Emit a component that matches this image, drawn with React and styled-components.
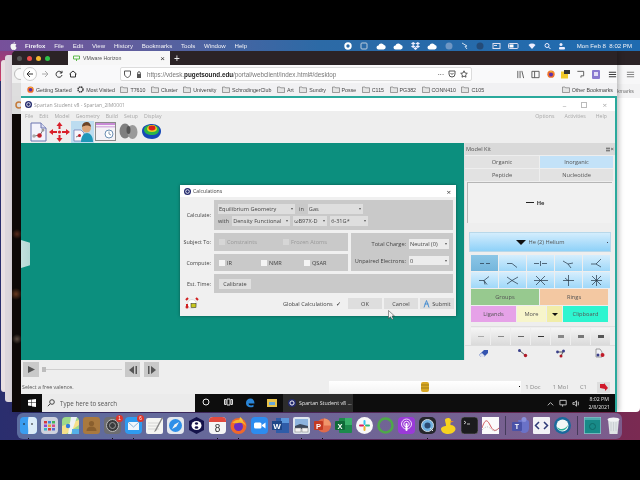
import styled, { createGlobalStyle } from "styled-components";

const Global = createGlobalStyle`
  html, body { margin: 0; padding: 0; background: #000; overflow: hidden; }
  * { box-sizing: border-box; }
`;

const winFont = `"Open Sans", "Noto Sans", sans-serif`;
const macFont = `"Liberation Sans", Arial, sans-serif`;

const Screen = styled.div`
  width: 640px;
  height: 480px;
  background: #000;
  display: flex;
  flex-direction: column;
  overflow: hidden;
  filter: blur(0.3px);
`;
const Letterbox = styled.div`
  height: ${({ $h }) => $h}px;
  background: #000;
  flex: none;
`;

/* mac menu bar */
const MenuBar = styled.div`
  height: 11px;
  flex: none;
  display: flex;
  align-items: center;
  padding: 0 8px 0 10px;
  background: linear-gradient(90deg, #77509a 0%, #5f5f9e 22%, #2c6aa6 50%, #1f6bb0 100%);
  color: #f2f2f6;
  font: 6.1px ${macFont};
`;
const MacMenus = styled.div`
  display: flex;
  align-items: center;
  gap: 8.8px;
  margin-left: 8px;
`;
const MacMenu = styled.span`
  font-weight: ${({ $bold }) => ($bold ? 700 : 400)};
`;
const Status = styled.div`
  margin-left: auto;
  display: flex;
  align-items: center;
  gap: 7.6px;
`;
const Clock = styled.span`
  margin-left: 3px;
  white-space: pre;
`;

/* desktop */
const Desktop = styled.div`
  position: relative;
  height: 389px;
  flex: none;
  overflow: hidden;
  background: linear-gradient(90deg, #2a2e6e 0%, #5c2a5c 60%, #7a2a52 100%);
`;
const WallTop = styled.div`
  position: absolute;
  left: 0;
  top: 0;
  width: 14px;
  height: 30px;
  background: linear-gradient(180deg, #8d3f80, #cf3a63);
`;
const BackWindow = styled.div`
  position: absolute;
  left: ${({ $x }) => $x}px;
  top: ${({ $y }) => $y}px;
  width: ${({ $w }) => $w}px;
  height: ${({ $h }) => $h}px;
  background: ${({ $c }) => $c};
  border-radius: 3px;
`;
const RightWindow = styled.div`
  position: absolute;
  left: 600px;
  top: 0;
  width: 40px;
  height: 361px;
  background: #fff;
  display: flex;
  flex-direction: column;
  border-bottom-right-radius: 4px;
`;
const RightTabs = styled.div`
  height: 14px;
  background: #2b2326;
`;
const RightNav = styled.div`
  height: 19px;
  background: #f7f7f8;
  display: flex;
  align-items: center;
  justify-content: flex-end;
  padding-right: 5px;
`;
const RightMarks = styled.div`
  height: 14px;
  background: #f3f3f4;
  display: flex;
  align-items: center;
  justify-content: flex-end;
  padding-right: 6px;
  color: #777;
  font: 5.3px ${macFont};
`;
const Browser = styled.div`
  position: absolute;
  left: 12px;
  top: 0;
  width: 605px;
  height: 361px;
  display: flex;
  flex-direction: column;
  box-shadow: 2px 0 5px rgba(0, 0, 0, 0.25);
`;
const TabStrip = styled.div`
  height: 14px;
  flex: none;
  background: #2b2326;
  display: flex;
  align-items: center;
  border-top-left-radius: 4px;
`;
const Light = styled.i`
  width: 5px;
  height: 5px;
  border-radius: 50%;
  background: ${({ $c }) => $c};
  margin-left: ${({ $m }) => $m}px;
  flex: none;
`;
const Tab = styled.div`
  align-self: flex-end;
  height: 14px;
  width: 102px;
  margin-left: 18px;
  background: #f7f7f7;
  display: flex;
  align-items: center;
  gap: 3px;
  padding: 0 5px;
  color: #555;
  font: 5.2px ${macFont};
`;
const TabClose = styled.span`
  margin-left: auto;
  font-size: 8px;
  color: #333;
`;
const NewTab = styled.span`
  margin-left: 0;
  width: 14px;
  text-align: center;
  color: #eee;
  font: 10px ${macFont};
`;
const BrowserBody = styled.div`
  flex: 1;
  min-height: 0;
  display: flex;
`;
const Strip = styled.div`
  width: 9px;
  flex: none;
  display: flex;
  flex-direction: column;
`;
const StripNav = styled.div`
  height: 18px;
  background: #efefef;
  display: flex;
  align-items: center;
  padding-left: 1px;
`;
const StripMarks = styled.div`
  height: 13px;
  background: #dedede;
`;
const StripPage = styled.div`
  height: 18px;
  background: #ddd;
  display: flex;
  align-items: center;
  padding-left: 3px;
`;
const StripDark = styled.div`
  flex: 1;
  background:
    radial-gradient(circle at 5px 120px, #5a2b1c 0, transparent 5px),
    radial-gradient(circle at 4px 180px, #6a3a20 0, transparent 6px),
    radial-gradient(circle at 5px 225px, #5a4a40 0, transparent 5px),
    #0e0807;
`;
const BrowserMain = styled.div`
  flex: 1;
  min-width: 0;
  display: flex;
  flex-direction: column;
`;
const NavBar = styled.div`
  height: 18px;
  flex: none;
  background: #f9f9fa;
  display: flex;
  align-items: center;
`;
const NavIcon = styled.span`
  width: ${({ $w }) => $w || 14}px;
  display: flex;
  justify-content: center;
  flex: none;
`;
const BackCircle = styled.span`
  width: 14px;
  height: 14px;
  margin-left: 2px;
  margin-right: 1px;
  border-radius: 50%;
  background: #fff;
  border: 1px solid #ccc;
  display: flex;
  align-items: center;
  justify-content: center;
  flex: none;
`;
const UrlBox = styled.div`
  width: 352px;
  height: 14px;
  margin-left: 40px;
  background: #fff;
  border: 1px solid #dcdcdc;
  border-radius: 2px;
  display: flex;
  align-items: center;
  gap: 5px;
  padding: 0 3px;
  color: #777;
  font: 6.3px ${macFont};
  flex: none;
`;
const UrlText = styled.span`
  white-space: nowrap;
  b { color: #222; font-weight: 700; }
`;
const UrlTail = styled.div`
  margin-left: auto;
  display: flex;
  align-items: center;
  gap: 4px;
  color: #333;
`;
const NavTools = styled.div`
  display: flex;
  align-items: center;
  gap: 2px;
  margin-left: 42px;
`;
const Bookmarks = styled.div`
  height: 13px;
  flex: none;
  background: #f1f1f3;
  display: flex;
  align-items: center;
  gap: 5.5px;
  padding: 0 4px 0 6px;
  color: #444;
  font: 5.3px ${macFont};
  white-space: nowrap;
`;
const Mark = styled.span`
  display: flex;
  align-items: center;
  gap: 2px;
  margin-left: ${({ $auto }) => ($auto ? "auto" : "0")};
`;
const Horizon = styled.div`
  flex: 1;
  min-height: 0;
  display: flex;
  flex-direction: column;
  border-top: 2px solid #2aa99c;
  border-right: 2px solid #2aa99c;
`;
const TitleBar = styled.div`
  height: 13px;
  flex: none;
  background: #fff;
  display: flex;
  align-items: center;
  gap: 2px;
  padding: 0 8px 0 4px;
  color: #999;
  font: 5.1px ${winFont};
`;
const WinControls = styled.div`
  margin-left: auto;
  display: flex;
  gap: 15px;
  color: #aaa;
  font-size: 8px;
  align-items: center;
`;
const AppMenu = styled.div`
  height: 9px;
  flex: none;
  background: #eeeeee;
  display: flex;
  align-items: center;
  gap: 6px;
  padding: 0 8px 0 4px;
  color: #a8a8a8;
  font: 5.2px ${winFont};
`;
const AppMenuRight = styled.div`
  margin-left: auto;
  display: flex;
  gap: 10px;
`;
const Tools = styled.div`
  height: 23px;
  flex: none;
  background: #eeeeee;
  display: flex;
  align-items: center;
  padding-left: 7px;
  gap: 1px;
`;
const ToolBtn = styled.div`
  width: ${({ $w }) => $w}px;
  height: 22px;
  display: flex;
  align-items: center;
  justify-content: center;
  background: ${({ $on }) => ($on ? "#bcdcf0" : "transparent")};
`;
const MainRow = styled.div`
  height: 217px;
  flex: none;
  display: flex;
`;
const Canvas = styled.div`
  position: relative;
  width: 443px;
  flex: none;
  background: #0c8f7e;
`;
const SideHandle = styled.div`
  position: absolute;
  left: 0;
  top: 97px;
  width: 9px;
  height: 28px;
  background: linear-gradient(90deg, #c3e0dd, #b3d8d4);
  clip-path: polygon(0 0, 100% 10%, 100% 90%, 0 100%);
`;

/* dialog */
const Dialog = styled.div`
  position: absolute;
  left: 159px;
  top: 42px;
  width: 276px;
  height: 131px;
  background: #f0f0f0;
  box-shadow: 0 0 3px rgba(0, 0, 0, 0.4);
  color: #444;
  font: 5.6px ${winFont};
`;
const DialogTitle = styled.div`
  height: 12px;
  background: #fff;
  display: flex;
  align-items: center;
  gap: 2px;
  padding: 0 5px 0 4px;
  font-size: 5.2px;
`;
const DialogClose = styled.span`
  margin-left: auto;
  font-size: 8px;
  color: #444;
`;
const Form = styled.div`
  display: grid;
  grid-template-columns: 29px 134px 102px;
  grid-template-rows: 30px 18px 17px 19px;
  gap: 3px;
  padding: 3px 0 0 2px;
`;
const Label = styled.div`
  display: flex;
  align-items: center;
  justify-content: flex-end;
  white-space: nowrap;
  font-size: 5.4px;
`;
const Section = styled.div`
  background: #c9c9c9;
  grid-column: ${({ $col }) => $col || "auto"};
  grid-row: ${({ $row }) => $row || "auto"};
  display: flex;
  flex-direction: ${({ $stack }) => ($stack ? "column" : "row")};
  align-items: ${({ $stack }) => ($stack ? "stretch" : "center")};
  justify-content: ${({ $stack }) => ($stack ? "center" : "flex-start")};
  gap: ${({ $gap }) => $gap || 0}px;
  padding: 0 4px 0 ${({ $pl }) => $pl || 5}px;
`;
const FormRow = styled.div`
  display: flex;
  align-items: center;
  gap: ${({ $gap }) => $gap || 3}px;
  justify-content: ${({ $end }) => ($end ? "flex-end" : "flex-start")};
  white-space: nowrap;
`;
const Select = styled.div`
  width: ${({ $w }) => $w}px;
  height: ${({ $h }) => $h || 10}px;
  background: ${({ $light }) => ($light ? "#ececec" : "#dedede")};
  display: flex;
  align-items: center;
  padding: 0 1px;
  color: #444;
  white-space: nowrap;
  overflow: hidden;
  flex: none;
  position: relative;
  &::after {
    content: "";
    position: absolute;
    right: 2px;
    top: 50%;
    margin-top: -1px;
    border: 1px solid transparent;
    border-top: 2px solid #555;
  }
`;
const Check = styled.label`
  display: flex;
  align-items: center;
  gap: 2px;
  width: ${({ $w }) => $w}px;
  color: ${({ $off }) => ($off ? "#999" : "#444")};
  white-space: nowrap;
  flex: none;
`;
const Box = styled.i`
  width: 6px;
  height: 6px;
  background: ${({ $off }) => ($off ? "#d6d6d6" : "#f4f4f4")};
  flex: none;
`;
const SmallBtn = styled.div`
  width: 32px;
  height: 10px;
  background: #e0e0e0;
  display: flex;
  align-items: center;
  justify-content: center;
`;
const DialogFoot = styled.div`
  display: flex;
  align-items: center;
  height: 13px;
  margin-top: 4px;
  padding: 0 2px 0 5px;
`;
const GlobalCalc = styled.span`
  margin-left: 84px;
  display: flex;
  align-items: center;
  gap: 3px;
  white-space: nowrap;
  width: 63px;
`;
const Tick = styled.span`
  font-size: 6px;
  color: #111;
`;
const FootBtn = styled.div`
  width: 34px;
  height: 11px;
  margin-left: 2px;
  background: #dedede;
  display: flex;
  align-items: center;
  justify-content: center;
  gap: 2px;
`;
const Pointer = styled.svg`
  position: absolute;
  left: 208px;
  top: 125px;
`;

/* model kit */
const Kit = styled.div`
  flex: 1;
  min-width: 0;
  background: #eeeeee;
  display: flex;
  flex-direction: column;
  border-left: 1px solid #e0e0e0;
  color: #555;
  font: 5.7px ${winFont};
`;
const KitTitle = styled.div`
  height: 12px;
  background: #d9d9d9;
  display: flex;
  align-items: center;
  justify-content: space-between;
  padding: 0 1px 0 1px;
  flex: none;
`;
const KitTitleTools = styled.span`
  display: flex;
  align-items: center;
  gap: 1px;
  color: #333;
  font-size: 6px;
`;
const KitTabs = styled.div`
  display: grid;
  grid-template-columns: 74px 73px;
  grid-auto-rows: 12px;
  gap: 1px 1px;
  margin-top: 1px;
  flex: none;
`;
const KitTab = styled.div`
  background: ${({ $on }) => ($on ? "#c3e2f8" : "#e2e2e2")};
  display: flex;
  align-items: center;
  justify-content: center;
`;
const Preview = styled.div`
  height: 41px;
  margin: 1px 0 0 2px;
  width: 145px;
  background: #f1f1f1;
  border-left: 1px solid #b5b5b5;
  border-top: 1px solid #b5b5b5;
  display: flex;
  align-items: center;
  justify-content: center;
  gap: 3px;
  padding-right: 10px;
  color: #333;
  flex: none;
`;
const ElementBtn = styled.div`
  position: relative;
  height: 20px;
  margin: 9px 4px 0 4px;
  background: linear-gradient(180deg, #d4edfd, #8ed1f8);
  border: 1px solid #b8d8ea;
  display: flex;
  align-items: center;
  justify-content: center;
  gap: 3px;
  flex: none;
`;
const ElementMark = styled.i`
  position: absolute;
  right: 2px;
  top: 9px;
  width: 1px;
  height: 1px;
  background: #445;
`;
const Caret = styled.i`
  width: 0;
  height: 0;
  border-left: ${({ $s }) => $s}px solid transparent;
  border-right: ${({ $s }) => $s}px solid transparent;
  border-top: ${({ $s }) => $s}px solid #111;
  display: block;
`;
const BondGrid = styled.div`
  display: grid;
  grid-template-columns: repeat(5, 27px);
  grid-auto-rows: 16px;
  gap: 1px;
  margin: 3px 0 0 6px;
  flex: none;
`;
const BondBtn = styled.div`
  background: ${({ $on }) =>
    $on ? "linear-gradient(180deg, #8cc6e6, #74b6dc)" : "linear-gradient(180deg, #d6eefd, #9fd8f9)"};
  display: flex;
  align-items: center;
  justify-content: center;
`;
const KitRow = styled.div`
  display: flex;
  gap: 1px;
  height: 16px;
  margin: 1px 0 0 6px;
  flex: none;
`;
const KitBtn = styled.div`
  width: ${({ $w }) => $w}px;
  background: ${({ $c }) => $c};
  display: flex;
  align-items: center;
  justify-content: center;
  color: #555;
  margin-left: ${({ $m }) => $m || 0}px;
`;
const OrderRow = styled.div`
  display: flex;
  gap: 1px;
  margin: 4px 0 0 6px;
  border-top: 1px solid #dfdfdf;
  padding-top: 1px;
  flex: none;
  height: 19px;
`;
const OrderBtn = styled.div`
  width: 19px;
  background: linear-gradient(180deg, #f5f5f5, #dadada);
  display: flex;
  align-items: center;
  justify-content: center;
`;
const OrderMark = styled.i`
  width: 6px;
  height: ${({ $h }) => $h}px;
  background: ${({ $c }) => $c};
  display: block;
`;
const KitIcons = styled.div`
  display: flex;
  align-items: center;
  justify-content: space-between;
  height: 14px;
  padding: 0 10px 0 13px;
  border-top: 1px solid #dddddd;
  flex: 1;
`;

/* bottom of the spartan window */
const Bottom = styled.div`
  height: 34px;
  flex: none;
  background: #eeeeee;
  display: flex;
  flex-direction: column;
  padding-top: 2px;
`;
const Player = styled.div`
  display: flex;
  align-items: center;
  height: 15px;
  padding-left: 2px;
`;
const PlayBtn = styled.div`
  width: ${({ $w }) => $w}px;
  height: 15px;
  background: #c9c9c9;
  margin-left: ${({ $m }) => $m || 0}px;
  display: flex;
  align-items: center;
  justify-content: center;
`;
const Slider = styled.div`
  width: 80px;
  margin-left: 3px;
  height: 1px;
  background: #cfcfcf;
  position: relative;
  &::before {
    content: "";
    position: absolute;
    left: 0;
    top: -2px;
    width: 4px;
    height: 5px;
    background: #bdbdbd;
  }
`;
const StatusRow = styled.div`
  display: flex;
  align-items: center;
  height: 12px;
  margin-top: 4px;
  padding: 0 5px 0 1px;
  color: #555;
  font: 5.3px ${winFont};
`;
const Progress = styled.div`
  margin-left: auto;
  width: 192px;
  height: 12px;
  background: linear-gradient(180deg, #fff, #f4f4f4);
  display: flex;
  align-items: center;
  justify-content: center;
  position: relative;
`;
const ProgressDot = styled.i`
  position: absolute;
  right: 1px;
  top: 5px;
  width: 1px;
  height: 1px;
  background: #000;
`;
const Counts = styled.div`
  display: flex;
  margin-left: 4px;
  color: #888;
  gap: 12px;
  align-items: center;
  white-space: nowrap;
  font-size: 5.9px;
`;
const SymBtn = styled.div`
  width: 13px;
  height: 11px;
  background: #ddd;
  margin-left: 10px;
  display: flex;
  align-items: center;
  justify-content: center;
`;

/* windows taskbar */
const Taskbar = styled.div`
  flex: 1;
  min-height: 0;
  background: #0d0d0d;
  display: flex;
  align-items: center;
  color: #e6e6e6;
  font: 5.3px ${winFont};
`;
const StartBtn = styled.div`
  width: 21px;
  height: 100%;
  display: flex;
  align-items: center;
  justify-content: center;
`;
const SearchBox = styled.div`
  width: 153px;
  height: 100%;
  background: #ebebeb;
  display: flex;
  align-items: center;
  gap: 5px;
  padding-left: 5px;
  color: #555;
  font-size: 6.2px;
`;
const TaskIcon = styled.div`
  width: 22px;
  display: flex;
  justify-content: center;
  flex: none;
`;
const TaskIcons = styled.div`
  display: flex;
  padding-left: 0;
`;
const TaskApp = styled.div`
  width: 70px;
  height: 100%;
  margin-left: 0;
  background: #2c2c2c;
  display: flex;
  align-items: center;
  gap: 3px;
  padding-left: 5px;
  white-space: nowrap;
`;
const Tray = styled.div`
  margin-left: auto;
  display: flex;
  align-items: center;
  gap: 4px;
  padding-right: 5px;
`;
const TrayClock = styled.div`
  text-align: center;
  line-height: 8px;
  font-size: 5.2px;
  margin-left: 3px;
`;

/* mac dock */
const Dock = styled.div`
  position: absolute;
  left: 17px;
  bottom: 1px;
  width: 605px;
  height: 26px;
  border-radius: 6px;
  background: linear-gradient(90deg, #5c6d9f, #6f6596 55%, #7d5c8c);
  display: flex;
  align-items: center;
  gap: 4px;
  padding: 0 0 1px 3px;
`;
const DockItem = styled.div`
  position: relative;
  width: 17px;
  height: 20px;
  padding-top: 1px;
  flex: none;
  &::after {
    content: "";
    display: ${({ $run }) => ($run ? "block" : "none")};
    position: absolute;
    left: 8px;
    bottom: -3px;
    width: 1px;
    height: 1px;
    background: #111;
  }
`;
const Badge = styled.span`
  position: absolute;
  top: -1px;
  right: -2px;
  width: 7px;
  height: 7px;
  border-radius: 50%;
  background: #e0362c;
  color: #fff;
  font: 4.5px/7px ${macFont};
  text-align: center;
`;
const DockSep = styled.i`
  width: 1px;
  height: 19px;
  margin: 0 2px;
  background: rgba(30, 30, 50, 0.55);
  flex: none;
`;

const Spartan = ({ size = 7 }) => (
  <svg width={size} height={size} viewBox="0 0 10 10">
    <circle cx="5" cy="5" r="5" fill="#232a6e" />
    <circle cx="5" cy="5" r="2.6" fill="none" stroke="#fff" strokeWidth="1.2" />
  </svg>
);

const Folder = () => (
  <svg width="8" height="7" viewBox="0 0 8 7">
    <path d="M.5 1h2.5l.7.8h3.8v4.7h-7z" fill="#e4e4e4" stroke="#666" strokeWidth=".6" />
  </svg>
);

const Fox = ({ s = 8 }) => (
  <svg width={s} height={s} viewBox="0 0 10 10">
    <circle cx="5" cy="5.2" r="4.6" fill="#f0702a" />
    <circle cx="5" cy="5.5" r="2.5" fill="#5b2fa8" />
    <path d="M2 1c1 1 3 0 4 .5 2 .6 3 2 3 3-1-1.200-3-2-4-1.500z" fill="#f7b52c" />
  </svg>
);

const Tray1 = ({ c = "#555", d }) => (
  <svg width="9" height="9" viewBox="0 0 10 10">
    <path d={d} fill="none" stroke={c} strokeWidth="1" />
  </svg>
);

const DocMol = () => (
  <svg width="17" height="20" viewBox="0 0 17 20">
    <path d="M1 1h10l5 5v13H1z" fill="#f3f3fb" stroke="#6a74b0" />
    <path d="M11 1v5h5" fill="#d8dcf0" stroke="#6a74b0" />
    <path d="M4 14l6-1 3-5" stroke="#777" fill="none" />
    <circle cx="4" cy="14" r="1.700" fill="#aaa" />
    <circle cx="9.500" cy="13.500" r="2.300" fill="#c2202a" />
    <circle cx="13" cy="8" r="1.500" fill="#999" />
  </svg>
);
const RedArrows = () => (
  <svg width="21" height="20" viewBox="0 0 21 20" fill="#d9202a">
    <path d="M10.500 0l3 4h-2v3h-2V4h-2zM10.500 20l3-4h-2v-3h-2v3h-2zM0 10l4-3v2h4v2H4v2zM21 10l-4-3v2h-4v2h4v2z" />
    <circle cx="10.500" cy="10" r="1.600" />
  </svg>
);
const Person = () => (
  <svg width="21" height="22" viewBox="0 0 21 22">
    <path d="M2 9h7l3 3v8H2z" fill="#f6f6fb" stroke="#6a74b0" strokeWidth=".7" />
    <path d="M4 16l4-2" stroke="#777" />
    <circle cx="7.500" cy="14.500" r="1.500" fill="#c2202a" />
    <path d="M9 21c0-6 3-9 6-9s6 3 6 9z" fill="#1f97b8" />
    <circle cx="14.500" cy="7" r="4.500" fill="#dba67a" />
    <path d="M10 6c0-4 3-5 5-5s4 2 4 5c-2-2-6-2-9 0z" fill="#6a4428" />
  </svg>
);
const CalcWin = () => (
  <svg width="21" height="19" viewBox="0 0 21 19">
    <rect x=".5" y=".5" width="20" height="18" fill="#f4f2f6" stroke="#8a8a8a" />
    <rect x="1" y="1" width="19" height="2" fill="#c98ad6" />
    <rect x="1" y="4" width="19" height="1.500" fill="#d9b4e2" />
    <circle cx="14" cy="12" r="4" fill="#fff" stroke="#6c8fb4" />
    <path d="M14 9.500V12l2 1" stroke="#4a6a8c" fill="none" strokeWidth=".7" />
  </svg>
);
const Blobs = () => (
  <svg width="19" height="17" viewBox="0 0 19 17">
    <ellipse cx="6" cy="8" rx="5.500" ry="7.500" fill="#7f7f7f" />
    <ellipse cx="13.500" cy="9" rx="5" ry="7" fill="#9a9a9a" />
    <ellipse cx="9.500" cy="7" rx="2" ry="4" fill="#555" />
  </svg>
);
const Surface = () => (
  <svg width="21" height="17" viewBox="0 0 21 17">
    <path d="M1 8c0-5 5-7 10-7s9 3 9 7-3 8-9 8S1 13 1 8z" fill="#1749b8" />
    <path d="M3 7c0-4 4-5 8-5s7 2 7 5-3 5-7 5-8-2-8-5z" fill="#2cb54a" />
    <path d="M6 6c0-2 2-4 5-4s5 2 5 4-2 3-5 3-5-1-5-3z" fill="#f0d020" />
    <ellipse cx="11" cy="5" rx="3.500" ry="2.400" fill="#d8201c" />
  </svg>
);
const Bond = ({ d }) => (
  <svg width="18" height="13" viewBox="0 0 18 13">
    <path d={d} fill="none" stroke="#234" strokeWidth=".7" />
  </svg>
);
const Eraser = () => (
  <svg width="11" height="9" viewBox="0 0 11 9">
    <path d="M1 6l5-5h4v3l-4 4H3z" fill="#3554b0" />
    <path d="M1 6l2 2h3l1-1-3-3z" fill="#dfe3ef" />
  </svg>
);
const BondIcon = ({ kind }) => (
  <svg width="11" height="10" viewBox="0 0 11 10">
    {kind === 0 && (
      <>
        <path d="M2 2l7 6" stroke="#555" />
        <circle cx="2.500" cy="2.500" r="1.500" fill="#3a3f8a" />
        <circle cx="8.500" cy="7.500" r="1.700" fill="#b01a28" />
      </>
    )}
    {kind === 1 && (
      <>
        <path d="M3 4h5l-2 4" stroke="#555" fill="none" />
        <circle cx="2.500" cy="4" r="1.400" fill="#3a3f8a" />
        <circle cx="8.500" cy="3" r="1.500" fill="#3a3f8a" />
        <circle cx="6" cy="8" r="1.500" fill="#b01a28" />
      </>
    )}
    {kind === 2 && (
      <>
        <path d="M2 1h4l2 3v5H2z" fill="#f2f2f6" stroke="#666" strokeWidth=".6" />
        <circle cx="4" cy="7" r="1.500" fill="#3a3f8a" />
        <circle cx="8.500" cy="7" r="2" fill="#c01a28" />
      </>
    )}
  </svg>
);

const Ic = ({ children }) => (
  <svg width="17" height="17" viewBox="0 0 17 17">
    {children}
  </svg>
);

const dockApps = [
  { run: true, art: <><rect width="17" height="17" rx="4" fill="#3a9df0" /><path d="M8.500 0H13a4 4 0 0 1 4 4v9a4 4 0 0 1-4 4H8c1-4-1-9 .5-17z" fill="#dcecf8" /><path d="M4 6v2M12 6v2" stroke="#222" /></> },
  { art: <><rect width="17" height="17" rx="4" fill="#cfd2de" /><g fill="#d63a3a"><rect x="3" y="4" width="3" height="2.500" /></g><rect x="7" y="4" width="3" height="2.500" fill="#3f86d8" /><rect x="11" y="4" width="3" height="2.500" fill="#44b35a" /><rect x="3" y="7.500" width="3" height="2.500" fill="#8a4ad0" /><rect x="7" y="7.500" width="3" height="2.500" fill="#e8a530" /><rect x="11" y="7.500" width="3" height="2.500" fill="#d84a8c" /><rect x="3" y="11" width="3" height="2.500" fill="#3ab0c8" /><rect x="7" y="11" width="3" height="2.500" fill="#d63a3a" /><rect x="11" y="11" width="3" height="2.500" fill="#5a6ad0" /></> },
  { art: <><rect width="17" height="17" rx="4" fill="#9ed98a" /><path d="M0 9l17-6v5L4 17H0z" fill="#f6e08a" /><path d="M9 0h6l-6 17H6z" fill="#eef2f4" /><circle cx="6" cy="9" r="2.200" fill="#2f7de0" /><path d="M10 12h7v5h-7z" fill="#55b0e8" /></> },
  { art: <><rect width="17" height="17" rx="3" fill="#a9793f" /><circle cx="8.500" cy="6.500" r="2.600" fill="#8a5f2e" /><path d="M3.500 14c0-3 2-4.500 5-4.500s5 1.500 5 4.500z" fill="#8a5f2e" /></> },
  { run: true, badge: "1", art: <><rect width="17" height="17" rx="4" fill="#6d6d70" /><circle cx="8.500" cy="8.500" r="6" fill="#3a3a3c" stroke="#bbb" /><circle cx="8.500" cy="8.500" r="3" fill="none" stroke="#999" /></> },
  { run: true, badge: "6", art: <><rect width="17" height="17" rx="4" fill="#2f9bef" /><rect x="3" y="5" width="11" height="8" fill="#f2f6fa" /><path d="M3 5l5.500 5L14 5" fill="none" stroke="#8bb4d6" /></> },
  { art: <><rect y="1" width="17" height="16" rx="2" fill="#f5f5f2" /><path d="M2 6h11M2 9h11M2 12h11" stroke="#c8c8c8" strokeWidth=".7" /><path d="M16 0L9 13l-1 2 2-1L17 1z" fill="#8a8a8a" /></> },
  { art: <><rect width="17" height="17" rx="4" fill="#e4e8ee" /><circle cx="8.500" cy="8.500" r="6.500" fill="#2f8fe8" /><path d="M12 5L9.500 9.500 5 12l2.500-4.500z" fill="#f4f4f4" /></> },
  { art: <><path d="M8.500 0l7.500 4v9l-7.500 4L1 13V4z" fill="#14124a" /><ellipse cx="8.500" cy="8.500" rx="5" ry="4.500" fill="#fff" /><ellipse cx="8.500" cy="6.500" rx="1.600" ry="1.200" fill="#14124a" /><ellipse cx="8.500" cy="10.500" rx="1.800" ry="1.300" fill="#14124a" /></> },
  { run: true, art: <><rect width="17" height="17" rx="4" fill="#f6f6f6" /><path d="M0 4a4 4 0 0 1 4-4h9a4 4 0 0 1 4 4v1H0z" fill="#e24a3f" /><text x="8.500" y="14.500" textAnchor="middle" fontFamily="Liberation Sans" fontSize="10" fill="#333">8</text></> },
  { run: true, art: <><circle cx="8.500" cy="9" r="8" fill="#f0682a" /><circle cx="8.500" cy="9.500" r="4.500" fill="#6a2fc0" /><path d="M2 5c2 0 3-2 5-2 4-1 8 2 9 6-2-3-5-4-8-3-2 0-4 1-6-1z" fill="#f8b52a" /><path d="M10 0c2 1 3 3 3 5l-4-1z" fill="#f8c03a" /></> },
  { art: <><rect width="17" height="17" rx="4" fill="#2d8cf0" /><rect x="3" y="5.500" width="7.500" height="6" rx="1.500" fill="#fff" /><path d="M11 8l3.500-2.500v6L11 9z" fill="#fff" /></> },
  { art: <><rect x="4" y="1" width="13" height="15" fill="#2f5ca8" /><rect x="9" y="1" width="8" height="5" fill="#5b97dc" /><rect y="4" width="10" height="9" fill="#1e4688" /><text x="5" y="11.500" textAnchor="middle" fontFamily="Liberation Sans" fontWeight="700" fontSize="8" fill="#fff">W</text></> },
  { run: true, art: <><rect width="17" height="17" rx="2" fill="#dfe6ee" /><rect x="2" y="2" width="13" height="7" fill="#8db4de" /><path d="M2 9l5-2 8 2v3H2z" fill="#3d4a5c" /><rect x="9" y="11" width="6" height="4" fill="#f4f4f4" stroke="#777" strokeWidth=".5" /><rect x="2" y="11" width="6" height="4" fill="#f4f4f4" stroke="#777" strokeWidth=".5" /></> },
  { run: true, art: <><circle cx="10" cy="8.500" r="7" fill="#e06a4a" /><path d="M10 8.500V1.500a7 7 0 0 1 7 7z" fill="#f0956a" /><rect y="4" width="9" height="9" rx="1" fill="#c43a22" /><text x="4.500" y="11.500" textAnchor="middle" fontFamily="Liberation Sans" fontWeight="700" fontSize="7.500" fill="#fff">P</text></> },
  { art: <><rect x="4" y="1" width="13" height="15" rx="1" fill="#1d8a4c" /><rect x="10" y="1" width="7" height="7" fill="#39b06a" /><rect y="4" width="10" height="9" rx="1" fill="#0f6a38" /><text x="5" y="11.500" textAnchor="middle" fontFamily="Liberation Sans" fontWeight="700" fontSize="7.500" fill="#fff">X</text></> },
  { art: <><circle cx="8.500" cy="8.500" r="8.500" fill="#f8f8f8" /><rect x="7.500" y="3" width="2" height="5" rx="1" fill="#36c5f0" /><rect x="9" y="7.500" width="5" height="2" rx="1" fill="#2eb67d" /><rect x="7.500" y="9" width="2" height="5" rx="1" fill="#ecb22e" /><rect x="3" y="7.500" width="5" height="2" rx="1" fill="#e01e5a" /></> },
  { art: <circle cx="8.500" cy="8.500" r="7" fill="none" stroke="#4fa84a" strokeWidth="2.600" /> },
  { art: <><rect width="17" height="17" rx="4" fill="#9a3ad8" /><circle cx="8.500" cy="7" r="5" fill="none" stroke="#f2e0fa" /><circle cx="8.500" cy="7" r="2.800" fill="none" stroke="#f2e0fa" /><rect x="7.500" y="6" width="2" height="8" rx="1" fill="#fff" /></> },
  { run: true, art: <><rect width="17" height="17" rx="5" fill="#26262c" /><circle cx="8.500" cy="8.500" r="6" fill="#6fb0e0" stroke="#cfd8e0" /><circle cx="8.500" cy="8.500" r="3" fill="#2a4a72" /><path d="M11 11l3 3" stroke="#ddd" /></> },
  { art: <><path d="M1 12c0-2 3-3 5-3 0-3-1-4-1-6 0-2 5-3 6 0 .5 2-1 3-.5 5 3 0 5 2 5 4s-3 5-7 5-7.500-2-7.500-5z" fill="#f7d21f" /><path d="M10 4l4 0-3 1.500z" fill="#ef8f1e" /></> },
  { art: <><rect width="17" height="17" rx="3.500" fill="#1b1b1d" stroke="#777" strokeWidth=".6" /><path d="M3 4l2 1.500L3 7M6 7h3" stroke="#eee" fill="none" strokeWidth=".8" /></> },
  { art: <><rect width="17" height="17" fill="#fbfbfb" /><path d="M0 11c3-9 5-9 8-3s5 7 9 3" fill="none" stroke="#c8353a" strokeWidth=".8" /><path d="M0 13c4-4 6-4 9-1s5 2 8-1" fill="none" stroke="#999" strokeWidth=".6" strokeDasharray="1 1" /></> },
  { sep: true },
  { art: <><path d="M6 3h9a2 2 0 0 1 2 2v6c0 3-2 5-5 5s-4-2-4-4z" fill="#6a72c8" /><circle cx="12" cy="2.500" r="2.500" fill="#8a90dc" /><rect y="5" width="10" height="9" rx="1" fill="#4a52a8" /><text x="5" y="12" textAnchor="middle" fontFamily="Liberation Sans" fontWeight="700" fontSize="7" fill="#fff">T</text></> },
  { art: <><rect width="17" height="17" rx="1" fill="#f2f2f6" /><path d="M6 5L2.500 8.500 6 12M11 5l3.500 3.500L11 12" fill="none" stroke="#2e3a78" strokeWidth="1.500" /></> },
  { art: <><circle cx="8.500" cy="8.500" r="8.500" fill="#1a6a9c" /><circle cx="8.500" cy="8.500" r="6" fill="#f2f7f6" /><path d="M3 10c3 3 8 3 11-2-1 6-9 8-11 2z" fill="#2bb39a" /></> },
  { sep: true },
  { art: <><rect width="17" height="17" fill="#4ea9ae" stroke="#c9d5dc" strokeWidth=".6" /><rect x="1" y="3" width="15" height="13" fill="#188a88" /><circle cx="8.500" cy="9.500" r="3" fill="none" stroke="#0f6c6a" /></> },
  { art: <><path d="M3 2h11l-1.500 15h-8z" fill="#dfe4e6" /><ellipse cx="8.500" cy="2.500" rx="6" ry="2" fill="#f2f4f5" /><path d="M6 5v9M8.500 5v9M11 5v9" stroke="#bcc3c7" strokeWidth=".6" /></> },
];

const bonds = [
  "M4 6.500h4M10 6.500h4",
  "M3 6.500h5l5 4",
  "M2 6.500h5M10 6.500h5M8.500 4v5",
  "M3 4l5 3 5-1M8 7l3 4",
  "M3 7h5l5-5M8 7l5 3",
  "M3 6.500h5l1 4M8 6.500l5-4M8 6.500l3 4",
  "M3 3l5 3.500-5 3.500M14 3L8 6.500l6 3.500",
  "M2 6.500h14M4 2l9 9M13 2L4 11",
  "M8.500 1v11M3 6.500h11M5 4l3 2.500",
  "M8.500 1v11M3 6.500h11M4 2l9 9M13 2l-9 9",
];

const orderMarks = [
  ["#aaa", 1],
  ["#888", 1],
  ["#666", 1],
  ["#333", 1.500],
  ["#888", 3],
  ["#777", 3],
  ["#555", 3],
];

export default function App() {
  return (
    <Screen>
      <Global />
      <Letterbox $h={40} />
      <MenuBar>
        <svg width="7" height="8" viewBox="0 0 7 8" fill="#f4f4f4">
          <path d="M3.500 2C2.500 1.500 .5 1.700.5 4.300.5 6 1.700 8 2.600 8c.4 0 .6-.3 1-.3s.6.300 1 .3c.8 0 1.700-1.400 2-2.300C5.300 5 5.300 3 6.500 2.600 6 1.700 4.500 1.500 3.500 2zM3.500 1.700C3.400.9 4 .2 4.800 0c0 .9-.5 1.600-1.300 1.700z" />
        </svg>
        <MacMenus>
          <MacMenu $bold>Firefox</MacMenu>
          <MacMenu>File</MacMenu>
          <MacMenu>Edit</MacMenu>
          <MacMenu>View</MacMenu>
          <MacMenu>History</MacMenu>
          <MacMenu>Bookmarks</MacMenu>
          <MacMenu>Tools</MacMenu>
          <MacMenu>Window</MacMenu>
          <MacMenu>Help</MacMenu>
        </MacMenus>
        <Status>
          <svg width="8" height="8"><circle cx="4" cy="4" r="2.700" fill="none" stroke="#fff" strokeWidth="2" /></svg>
          <svg width="8" height="8"><rect x="1" y="1" width="6" height="6" rx="1" fill="none" stroke="#bcd" /></svg>
          {[0, 1].map((i) => (
            <svg key={i} width="10" height="8" viewBox="0 0 10 8"><path d="M2.500 7.500a2 2 0 0 1 0-4 3 3 0 0 1 5.500-.5 2.300 2.300 0 0 1-.3 4.500z" fill="#fff" /></svg>
          ))}
          <svg width="9" height="8" viewBox="0 0 9 8" fill="#eef"><path d="M2.200 0L4.500 1.500 2.200 3 0 1.500zM6.800 0L9 1.500 6.800 3 4.500 1.500zM2.200 3L4.500 4.500 2.200 6 0 4.500zM6.800 3L9 4.500 6.800 6 4.500 4.500zM4.500 5L6.500 6.400 4.500 8 2.500 6.400z" /></svg>
          <svg width="10" height="8" viewBox="0 0 10 8"><path d="M2.500 7.500a2 2 0 0 1 0-4 3 3 0 0 1 5.500-.5 2.300 2.300 0 0 1-.3 4.500z" fill="#fff" /></svg>
          <svg width="8" height="8"><circle cx="4" cy="4" r="3.500" fill="#6f97c4" /></svg>
          <svg width="8" height="8"><path d="M1 1l5 3-2 .5L6 7" stroke="#cde" fill="none" /></svg>
          <svg width="8" height="8"><circle cx="4" cy="4" r="3.500" fill="#244b78" /></svg>
          <svg width="9" height="8"><rect x="1" y="1.500" width="7" height="5" fill="none" stroke="#dde" /><rect x="2" y="3" width="3" height="1" fill="#dde" /></svg>
          <svg width="12" height="8"><rect x=".5" y="1.500" width="9.500" height="5" rx="1" fill="none" stroke="#dde" /><rect x="1.500" y="2.500" width="4" height="3" fill="#fff" /></svg>
          <svg width="8" height="8" viewBox="0 0 8 8"><path d="M4 7L.5 3a5 5 0 0 1 7 0z" fill="#eef" /></svg>
          <svg width="7" height="8"><circle cx="3" cy="3.500" r="2" fill="none" stroke="#eef" /><path d="M4.500 5L6.500 7" stroke="#eef" /></svg>
          <svg width="8" height="8"><circle cx="3" cy="2.500" r="1.500" fill="#eef" /><rect x="1" y="5" width="6" height="2.500" rx="1" fill="#eef" /></svg>
          <Clock>Mon Feb 8  8:02 PM</Clock>
        </Status>
      </MenuBar>
      <Desktop>
        <WallTop />
        <BackWindow $x={1} $y={9} $w={6} $h={332} $c="#e9e0e3" />
        <BackWindow $x={5} $y={4} $w={9} $h={347} $c="#dcd6dc" />
        <RightWindow>
          <RightTabs />
          <RightNav>
            <Tray1 c="#777" d="M1 2.500h8M1 5h8M1 7.500h8" />
          </RightNav>
          <RightMarks>kmarks</RightMarks>
        </RightWindow>
        <Browser>
          <TabStrip>
            <Light $c="#555" $m={5} />
            <Light $c="#ee4b4b" $m={5} />
            <Light $c="#f5b82e" $m={4} />
            <Light $c="#2fc24a" $m={4} />
            <Tab>
              <svg width="7" height="7" viewBox="0 0 7 7"><path d="M.5 1h6v3h-6zM3.500 4v2" fill="none" stroke="#5cb84a" /></svg>
              VMware Horizon
              <TabClose>×</TabClose>
            </Tab>
            <NewTab>+</NewTab>
          </TabStrip>
          <BrowserBody>
            <Strip>
              <StripNav>
                <svg width="8" height="14"><circle cx="7" cy="7" r="5.500" fill="#fafafa" stroke="#bbb" /></svg>
              </StripNav>
              <StripMarks />
              <StripPage>
                <svg width="6" height="8"><circle cx="4" cy="4" r="3" fill="#ddd" stroke="#c47a3a" strokeWidth="1.500" /></svg>
              </StripPage>
              <StripDark />
            </Strip>
            <BrowserMain>
              <NavBar>
                <BackCircle>
                  <svg width="8" height="8" viewBox="0 0 8 8"><path d="M7 4H1M4 1L1 4l3 3" fill="none" stroke="#333" /></svg>
                </BackCircle>
                <NavIcon $w={14}>
                  <svg width="8" height="8" viewBox="0 0 8 8"><path d="M1 4h6M4 1l3 3-3 3" fill="none" stroke="#aaa" /></svg>
                </NavIcon>
                <NavIcon $w={14}>
                  <svg width="8" height="8" viewBox="0 0 8 8"><path d="M6.800 3A3 3 0 1 0 7 5M7 .8V3H4.800" fill="none" stroke="#333" /></svg>
                </NavIcon>
                <NavIcon $w={14}>
                  <svg width="8" height="8" viewBox="0 0 8 8"><path d="M.5 4L4 1l3.500 3M1.500 3.500V7h5V3.500" fill="none" stroke="#333" /></svg>
                </NavIcon>
                <UrlBox>
                  <svg width="7" height="8" viewBox="0 0 7 8"><path d="M.5 1h6v3c0 2-1.500 3-3 3.500C2 7 .5 6 .5 4z" fill="none" stroke="#555" /></svg>
                  <svg width="6" height="7" viewBox="0 0 6 7"><rect x="1" y="3" width="4" height="4" fill="#555" /><path d="M1.700 3V2a1.300 1.300 0 0 1 2.600 0v1" fill="none" stroke="#555" /></svg>
                  <UrlText>
                    https://vdesk.<b>pugetsound.edu</b>/portal/webclient/index.html#/desktop
                  </UrlText>
                  <UrlTail>
                    <span>···</span>
                    <svg width="8" height="8" viewBox="0 0 8 8"><path d="M1 1h6v3a3 3 0 0 1-6 0zM2.500 3L4 4.500 5.500 3" fill="none" stroke="#555" /></svg>
                    <svg width="8" height="8" viewBox="0 0 8 8"><path d="M4 .8l1 2.200 2.300.3-1.700 1.600.4 2.300L4 6.100 2 7.200l.4-2.300L.7 3.300 3 3z" fill="none" stroke="#333" strokeWidth=".8" /></svg>
                  </UrlTail>
                </UrlBox>
                <NavTools>
                  <NavIcon $w={13}><Tray1 d="M2 1v8M4.500 1v8M6.500 1l2 8" /></NavIcon>
                  <NavIcon $w={13}><Tray1 d="M1 1.500h8v7H1zM4 1.500v7" /></NavIcon>
                  <NavIcon $w={13}><Fox s={8} /></NavIcon>
                  <NavIcon $w={13}>
                    <svg width="9" height="9"><rect y="1.500" width="7" height="7" fill="#f2c92a" /><rect x="3" width="6" height="4" fill="#333" /></svg>
                  </NavIcon>
                  <NavIcon $w={13}><Tray1 d="M1.500 1.500h7v5h-3v2" /></NavIcon>
                  <NavIcon $w={13}>
                    <svg width="8" height="9"><rect width="8" height="9" rx="1" fill="#8a7ad0" /><rect x="2" y="2" width="4" height="4" fill="#e2def5" /></svg>
                  </NavIcon>
                  <NavIcon $w={17}><Tray1 c="#222" d="M1 2.500h8M1 5h8M1 7.500h8" /></NavIcon>
                </NavTools>
              </NavBar>
              <Bookmarks>
                <Mark><Fox s={7} />Getting Started</Mark>
                <Mark>
                  <svg width="7" height="7"><circle cx="3.500" cy="3.500" r="2.500" fill="none" stroke="#333" strokeWidth="1.400" strokeDasharray="1.500 .5" /></svg>
                  Most Visited
                </Mark>
                {["T7610", "Cluster", "University", "SchrodingerClub", "Art", "Sundry", "Posse", "C115", "PG382", "CONN410", "C105"].map((m) => (
                  <Mark key={m}><Folder />{m}</Mark>
                ))}
                <Mark $auto><Folder />Other Bookmarks</Mark>
              </Bookmarks>
              <Horizon>
                <TitleBar>
                  <Spartan />
                  Spartan Student v8 - Spartan_2IM0001
                  <WinControls>
                    <span>–</span>
                    <svg width="6" height="6"><rect x=".5" y=".5" width="5" height="5" fill="none" stroke="#bbb" /></svg>
                    <span>×</span>
                  </WinControls>
                </TitleBar>
                <AppMenu>
                  <span>File</span>
                  <span>Edit</span>
                  <span>Model</span>
                  <span>Geometry</span>
                  <span>Build</span>
                  <span>Setup</span>
                  <span>Display</span>
                  <AppMenuRight>
                    <span>Options</span>
                    <span>Activities</span>
                    <span>Help</span>
                  </AppMenuRight>
                </AppMenu>
                <Tools>
                  <ToolBtn $w={20}><DocMol /></ToolBtn>
                  <ToolBtn $w={21}><RedArrows /></ToolBtn>
                  <ToolBtn $w={23} $on><Person /></ToolBtn>
                  <ToolBtn $w={21}><CalcWin /></ToolBtn>
                  <ToolBtn $w={22}><Blobs /></ToolBtn>
                  <ToolBtn $w={22}><Surface /></ToolBtn>
                </Tools>
                <MainRow>
                  <Canvas>
                    <SideHandle />
                    <Dialog>
                      <DialogTitle>
                        <Spartan size={7} />
                        Calculations
                        <DialogClose>×</DialogClose>
                      </DialogTitle>
                      <Form>
                        <Label>Calculate:</Label>
                        <Section $col="2 / 4" $stack $gap={2} $pl={4}>
                          <FormRow $gap={4}>
                            <Select $w={77}>Equilibrium Geometry</Select>
                            in
                            <Select $w={55}>Gas</Select>
                          </FormRow>
                          <FormRow>
                            with
                            <Select $w={58}>Density Functional</Select>
                            <Select $w={34}>ωB97X-D</Select>
                            <Select $w={38}>6-31G*</Select>
                          </FormRow>
                        </Section>
                        <Label>Subject To:</Label>
                        <Section>
                          <Check $w={64} $off><Box $off />Constraints</Check>
                          <Check $w={50} $off><Box $off />Frozen Atoms</Check>
                        </Section>
                        <Section $col="3" $row="2 / 4" $stack $gap={7}>
                          <FormRow $end>
                            Total Charge:
                            <Select $w={40} $light>Neutral (0)</Select>
                          </FormRow>
                          <FormRow $end>
                            Unpaired Electrons:
                            <Select $w={40} $h={9} $light>0</Select>
                          </FormRow>
                        </Section>
                        <Label>Compute:</Label>
                        <Section>
                          <Check $w={42}><Box />IR</Check>
                          <Check $w={43}><Box />NMR</Check>
                          <Check $w={30}><Box />QSAR</Check>
                        </Section>
                        <Label>Est. Time:</Label>
                        <Section $col="2 / 4">
                          <SmallBtn>Calibrate</SmallBtn>
                        </Section>
                      </Form>
                      <DialogFoot>
                        <svg width="14" height="14" viewBox="0 0 14 14">
                          <circle cx="7" cy="7" r="4.500" fill="#fff" stroke="#ddd" />
                          <path d="M1 3l2-2M13 3l-2-2M1 8l2 0" stroke="#d02020" strokeWidth="2" />
                          <rect x="6" y="6.500" width="5" height="4" fill="#c8c820" stroke="#222" strokeWidth=".5" />
                          <circle cx="2" cy="10" r="1.500" fill="#d02020" />
                        </svg>
                        <GlobalCalc>
                          Global Calculations
                          <Tick>✓</Tick>
                        </GlobalCalc>
                        <FootBtn>OK</FootBtn>
                        <FootBtn>Cancel</FootBtn>
                        <FootBtn>
                          <svg width="7" height="8" viewBox="0 0 7 8"><path d="M3.500 .5L1 7.500M3.500 .5L6 7.500M1.500 4h4" fill="none" stroke="#4a8fd0" /></svg>
                          Submit
                        </FootBtn>
                      </DialogFoot>
                      <Pointer width="7" height="10" viewBox="0 0 7 10">
                        <path d="M.5.5v8l2-1.700L4 9.500l1.300-.6L4 6h2.500z" fill="#f5f5f5" stroke="#333" strokeWidth=".5" />
                      </Pointer>
                    </Dialog>
                  </Canvas>
                  <Kit>
                    <KitTitle>
                      Model Kit
                      <KitTitleTools>
                        <svg width="4" height="5"><path d="M1 0v5M3 0v5M0 1.500h4M0 3.500h4" stroke="#444" strokeWidth=".5" /></svg>
                        ×
                      </KitTitleTools>
                    </KitTitle>
                    <KitTabs>
                      <KitTab>Organic</KitTab>
                      <KitTab $on>Inorganic</KitTab>
                      <KitTab>Peptide</KitTab>
                      <KitTab>Nucleotide</KitTab>
                    </KitTabs>
                    <Preview>
                      <svg width="8" height="2"><rect width="8" height="1" fill="#222" /></svg>
                      <b>He</b>
                    </Preview>
                    <ElementBtn>
                      <Caret $s={5} />
                      He (2) Helium
                      <ElementMark />
                    </ElementBtn>
                    <BondGrid>
                      {bonds.map((d, i) => (
                        <BondBtn key={d} $on={i === 0}><Bond d={d} /></BondBtn>
                      ))}
                    </BondGrid>
                    <KitRow>
                      <KitBtn $w={68} $c="#97c98f">Groups</KitBtn>
                      <KitBtn $w={68} $c="#f3c8a2">Rings</KitBtn>
                    </KitRow>
                    <KitRow>
                      <KitBtn $w={45} $c="#e6a2e8">Ligands</KitBtn>
                      <KitBtn $w={29} $c="#f7f5cb">More</KitBtn>
                      <KitBtn $w={15} $c="#f1eda8"><Caret $s={3} /></KitBtn>
                      <KitBtn $w={45} $c="#2ef5d0">Clipboard</KitBtn>
                    </KitRow>
                    <OrderRow>
                      {orderMarks.map(([c, h], i) => (
                        <OrderBtn key={i}><OrderMark $c={c} $h={h} /></OrderBtn>
                      ))}
                    </OrderRow>
                    <KitIcons>
                      <Eraser />
                      <BondIcon kind={0} />
                      <BondIcon kind={1} />
                      <BondIcon kind={2} />
                    </KitIcons>
                  </Kit>
                </MainRow>
                <Bottom>
                  <Player>
                    <PlayBtn $w={16}>
                      <svg width="7" height="7"><path d="M0 0l7 3.500L0 7z" fill="#555" /></svg>
                    </PlayBtn>
                    <Slider />
                    <PlayBtn $w={15} $m={3}>
                      <svg width="8" height="8"><path d="M5 0L0 4l5 4zM6.500 0H8v8H6.500z" fill="#555" /></svg>
                    </PlayBtn>
                    <PlayBtn $w={15} $m={4}>
                      <svg width="8" height="8"><path d="M0 0h1.500v8H0zM3 0l5 4-5 4z" fill="#555" /></svg>
                    </PlayBtn>
                  </Player>
                  <StatusRow>
                    Select a free valence.
                    <Progress>
                      <svg width="8" height="10" viewBox="0 0 8 10">
                        <rect width="8" height="10" rx="2" fill="#d8a824" />
                        <path d="M0 3h8M0 6h8" stroke="#8a6a14" strokeWidth=".7" />
                      </svg>
                      <ProgressDot />
                    </Progress>
                    <Counts>
                      <span>1 Doc</span>
                      <span>1 Mol</span>
                      <span>C1</span>
                    </Counts>
                    <SymBtn>
                      <svg width="8" height="8" viewBox="0 0 8 8"><path d="M0 1l4 0 0-1 4 5-3 3 0-2-5-1z" fill="#d0182a" /></svg>
                    </SymBtn>
                  </StatusRow>
                </Bottom>
                <Taskbar>
                  <StartBtn>
                    <svg width="8" height="8"><path d="M0 1l3.500-.5v3H0zM4 .4L8 0v3.500H4zM0 4h3.500v3L0 6.500zM4 4h4v4l-4-.5z" fill="#fff" /></svg>
                  </StartBtn>
                  <SearchBox>
                    <svg width="8" height="8" viewBox="0 0 8 8"><circle cx="5" cy="3" r="2.300" fill="none" stroke="#444" /><path d="M3.300 4.700L.8 7.200" stroke="#444" /></svg>
                    Type here to search
                  </SearchBox>
                  <TaskIcons>
                    <TaskIcon>
                      <svg width="8" height="8"><circle cx="4" cy="4" r="3" fill="none" stroke="#eee" /></svg>
                    </TaskIcon>
                    <TaskIcon>
                      <svg width="9" height="8"><path d="M.5 1.500h1.500v5H.5zM3 1h3v6H3zM7 1.500h1.500v5H7z" fill="none" stroke="#ddd" /></svg>
                    </TaskIcon>
                    <TaskIcon>
                      <svg width="10" height="10" viewBox="0 0 10 10"><path d="M1 5c0-3 2-4.500 4.500-4.500S9.500 2.500 9.500 5.500H3.500c0 2 3 2.500 5 1.200v2C6 10 1 9.500 1 5z" fill="#2a86d8" /></svg>
                    </TaskIcon>
                    <TaskIcon>
                      <svg width="10" height="9"><rect y="1" width="10" height="8" fill="#e8c24a" /><rect x="2" y="4" width="6" height="3" fill="#6aa8d8" /></svg>
                    </TaskIcon>
                  </TaskIcons>
                  <TaskApp>
                    <Spartan size={8} />
                    Spartan Student v8 ...
                  </TaskApp>
                  <Tray>
                    <Tray1 c="#ccc" d="M2 7l3-3 3 3" />
                    <Tray1 c="#ccc" d="M1 1.500h7v5H1zM4 6.500v2" />
                    <Tray1 c="#ccc" d="M1 4h2l2-2v6L3 6H1zM7 3v4" />
                    <TrayClock>
                      8:02 PM
                      <br />
                      2/8/2021
                    </TrayClock>
                  </Tray>
                </Taskbar>
              </Horizon>
            </BrowserMain>
          </BrowserBody>
        </Browser>
        <Dock>
          {dockApps.map((app, i) =>
            app.sep ? (
              <DockSep key={i} />
            ) : (
              <DockItem key={i} $run={app.run}>
                <Ic>{app.art}</Ic>
                {app.badge && <Badge>{app.badge}</Badge>}
              </DockItem>
            )
          )}
        </Dock>
      </Desktop>
      <Letterbox $h={40} />
    </Screen>
  );
}
